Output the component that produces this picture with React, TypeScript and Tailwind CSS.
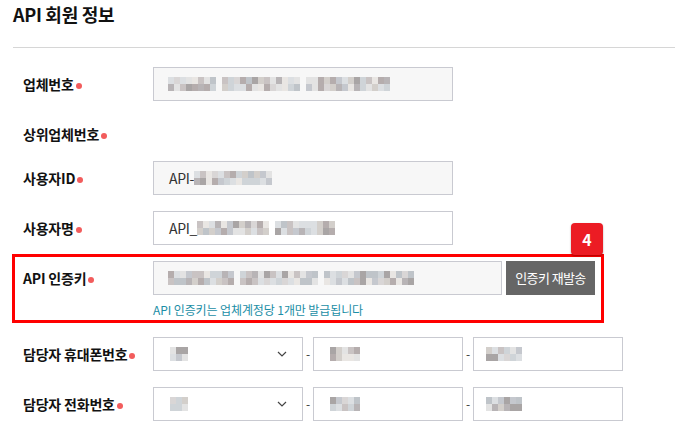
import React from "react";

const PALETTE = [
  "#d9d6d6", "#c9c3c3", "#b5adad", "#cfd4d8", "#e3e3e3", "#bfc4c9",
  "#a9a5a5", "#e9e6e3", "#d3cfcb", "#c5c8ce", "#dcdfe2", "#b8b4b6",
];

function Mosaic({ segs, seed }: { segs: number[]; seed: number }) {
  let s = seed;
  const rnd = () => {
    s = (s * 9301 + 49297) % 233280;
    return s / 233280;
  };
  return (
    <div className="flex gap-[6px]">
      {segs.map((n, i) => (
        <div key={i} className="grid grid-rows-2 grid-flow-col">
          {Array.from({ length: n * 2 }).map((_, j) => (
            <div
              key={j}
              className="w-[6px] h-[7px]"
              style={{ background: PALETTE[Math.floor(rnd() * PALETTE.length)] }}
            />
          ))}
        </div>
      ))}
    </div>
  );
}

function Label({ text }: { text: string }) {
  return (
    <div className="w-[130px] shrink-0 flex items-center">
      <span className="font-bold text-[14px] leading-[20px] tracking-[-0.2px] text-[#111]">{text}</span>
      <span className="ml-[2px] mt-[3px] w-[6px] h-[6px] rounded-full bg-[#f25c5c]" />
    </div>
  );
}

function Chevron() {
  return (
    <svg width="10" height="6" viewBox="0 0 10 6" className="shrink-0">
      <polyline points="1,1 5,5 9,1" fill="none" stroke="#444" strokeWidth="1.2" />
    </svg>
  );
}

function Dash() {
  return <div className="w-[10px] flex justify-center text-[12px] text-[#333] leading-none">-</div>;
}

function PhoneRow({ label, seeds, mt }: { label: string; seeds: number[]; mt: string }) {
  return (
    <div className={`flex items-center h-[34px] ${mt}`}>
      <Label text={label} />
      <div className="w-[150px] h-[34px] border border-[#c9cad1] bg-white flex items-center pl-[16px] pr-[15px] justify-between">
        <Mosaic segs={[3]} seed={seeds[0]} />
        <Chevron />
      </div>
      <Dash />
      <div className="w-[150px] h-[34px] border border-[#c9cad1] bg-white flex items-center pl-[16px]">
        <Mosaic segs={[5]} seed={seeds[1]} />
      </div>
      <Dash />
      <div className="w-[150px] h-[34px] border border-[#c9cad1] bg-white flex items-center pl-[12px]">
        <Mosaic segs={[6]} seed={seeds[2]} />
      </div>
    </div>
  );
}

export default function App() {
  return (
    <div className="w-[675px] h-[438px] overflow-hidden bg-white font-['Noto_Sans_CJK_KR','Noto_Sans',sans-serif]">
      <div className="pl-[13px]">
        <div className="h-[48px] border-b border-[#d6d6d6] pt-[1px]">
          <h2 className="text-[18px] leading-[26px] font-bold tracking-[-0.3px] text-[#111]">API 회원 정보</h2>
        </div>

        <div className="pl-[10px]">
          <div className="flex items-center h-[34px] mt-[19px]">
            <Label text="업체번호" />
            <div className="w-[300px] h-[34px] border border-[#c9cad1] bg-[#f7f7f7] flex items-center pl-[14px]">
              <Mosaic segs={[8, 13, 14]} seed={17} />
            </div>
          </div>

          <div className="flex items-center h-[34px] mt-[16px]">
            <Label text="상위업체번호" />
          </div>

          <div className="flex items-center h-[34px] mt-[10px]">
            <Label text="사용자ID" />
            <div className="w-[300px] h-[34px] border border-[#c9cad1] bg-[#f7f7f7] flex items-center pl-[15px]">
              <span className="text-[14px] text-[#333] tracking-[-0.3px]">API-</span>
              <Mosaic segs={[13]} seed={41} />
            </div>
          </div>

          <div className="flex items-center h-[34px] mt-[16px]">
            <Label text="사용자명" />
            <div className="w-[300px] h-[34px] border border-[#c9cad1] bg-white flex items-center pl-[15px]">
              <span className="text-[14px] text-[#333] tracking-[-0.3px]">API_</span>
              <Mosaic segs={[12, 10]} seed={73} />
            </div>
          </div>
        </div>

        <div className="relative -ml-[1px] mt-[9px] w-[592px] border-[3px] border-[#ff0000] pl-[8px] pt-[4px] pb-[2px]">
          <div className="absolute right-[-2px] top-[-34px] w-[32px] h-[32px] rounded-[4px] bg-[#ec1c24] shadow-[0_1px_2px_rgba(0,0,0,0.35)] flex items-center justify-center text-white font-bold text-[16px] leading-none">
            4
          </div>
          <div className="flex items-center h-[34px]">
            <Label text="API 인증키" />
            <div className="w-[349px] h-[34px] border border-[#c9cad1] bg-[#f7f7f7] flex items-center pl-[14px]">
              <Mosaic segs={[11, 13, 15]} seed={101} />
            </div>
            <button className="ml-[4px] w-[89px] h-[34px] bg-[#666666] text-white text-[13px] tracking-[-0.6px] flex items-center justify-center">
              인증키 재발송
            </button>
          </div>
          <div className="ml-[130px] mt-[7px] text-[12px] leading-[16px] tracking-[-0.1px] text-[#1b8ea6]">
            API 인증키는 업체계정당 1개만 발급됩니다
          </div>
        </div>

        <div className="pl-[10px]">
          <PhoneRow label="담당자 휴대폰번호" seeds={[5, 9, 13]} mt="mt-[14px]" />
          <PhoneRow label="담당자 전화번호" seeds={[21, 33, 57]} mt="mt-[16px]" />
          <div className="flex items-center h-[34px] mt-[17px]">
            <div className="w-[130px] shrink-0" />
            <div className="w-[300px] h-[34px] border border-[#c9cad1] bg-white" />
          </div>
        </div>
      </div>
    </div>
  );
}
